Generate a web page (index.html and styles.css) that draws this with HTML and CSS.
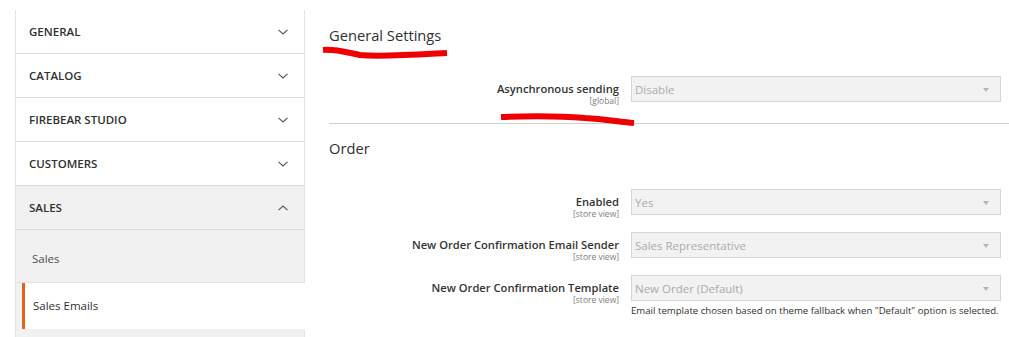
FILE: index.html
```html
<!DOCTYPE html>
<html>
<head>
<meta charset="utf-8">
<link rel="stylesheet" href="styles.css">
</head>
<body>
<div class="page">
  <aside class="sidebar">
    <div class="tab"><span>GENERAL</span><svg class="chev" viewBox="0 0 10 6"><path d="M0.5 0.8 L5 5 L9.5 0.8" /></svg></div>
    <div class="tab"><span>CATALOG</span><svg class="chev" viewBox="0 0 10 6"><path d="M0.5 0.8 L5 5 L9.5 0.8" /></svg></div>
    <div class="tab"><span>FIREBEAR STUDIO</span><svg class="chev" viewBox="0 0 10 6"><path d="M0.5 0.8 L5 5 L9.5 0.8" /></svg></div>
    <div class="tab"><span>CUSTOMERS</span><svg class="chev" viewBox="0 0 10 6"><path d="M0.5 0.8 L5 5 L9.5 0.8" /></svg></div>
    <div class="tab open"><span>SALES</span><svg class="chev" viewBox="0 0 10 6"><path d="M0.5 5.2 L5 1 L9.5 5.2" /></svg></div>
    <div class="sub">
      <div class="sub-item first">Sales</div>
      <div class="sub-item active">Sales Emails</div>
      <div class="sub-item rest"></div>
    </div>
  </aside>
  <main class="main">
    <h2 class="title">General Settings</h2>
    <div class="row async">
      <div class="label"><span class="name">Asynchronous sending</span><span class="scope">[global]</span></div>
      <div class="field"><div class="select">Disable<span class="arrow"></span></div></div>
    </div>
    <div class="sep"></div>
    <h2 class="title order">Order</h2>
    <div class="row first-order">
      <div class="label"><span class="name">Enabled</span><span class="scope">[store view]</span></div>
      <div class="field"><div class="select">Yes<span class="arrow"></span></div></div>
    </div>
    <div class="row">
      <div class="label"><span class="name">New Order Confirmation Email Sender</span><span class="scope">[store view]</span></div>
      <div class="field"><div class="select">Sales Representative<span class="arrow"></span></div></div>
    </div>
    <div class="row">
      <div class="label"><span class="name">New Order Confirmation Template</span><span class="scope">[store view]</span></div>
      <div class="field"><div class="select">New Order (Default)<span class="arrow"></span></div><div class="note">Email template chosen based on theme fallback when "Default" option is selected.</div></div>
    </div>
  </main>
</div>
<svg class="marks" width="1009" height="337" viewBox="0 0 1009 337">
  <path d="M323 50 C335 49 345 52 360 55 C380 57 410 55 447 53" />
  <path d="M501 117 C530 116 560 116 585 118 C605 119 620 122 634 123" />
</svg>
</body>
</html>
```
FILE: styles.css
```css
* { box-sizing: border-box; }
html, body { margin: 0; padding: 0; background: #fff; }
body {
  font-family: "Open Sans", "Liberation Sans", sans-serif;
  color: #303030;
  width: 1009px;
  height: 337px;
  overflow: hidden;
  position: relative;
}
.page {
  display: flex;
  align-items: flex-start;
  padding-left: 15px;
  padding-top: 10px;
}
.sidebar {
  width: 290px;
  flex: none;
  border-left: 1px solid #e3e3e3;
  border-right: 1px solid #e3e3e3;
}
.tab {
  height: 44px;
  border-bottom: 1px solid #dcdcdc;
  display: flex;
  align-items: center;
  justify-content: space-between;
  padding: 0 16px 0 13px;
  font-size: 11.5px;
  font-weight: 600;
  color: #303030;
  background: #fff;
}
.tab.open { background: #f1f1f1; }
.chev {
  width: 10px;
  height: 6px;
  fill: none;
  stroke: #555;
  stroke-width: 1.1;
}
.sub { background: #f1f1f1; }
.sub-item {
  font-size: 11.5px;
  color: #303030;
  display: flex;
  align-items: center;
}
.sub-item.first {
  height: 53px;
  padding: 4px 0 0 16px;
  color: #505050;
  border-bottom: 1px solid #e3e3e3;
}
.sub-item.active {
  height: 46px;
  margin-left: 6px;
  padding-left: 8px;
  padding-bottom: 2px;
  background: #fff;
  border-left: 3px solid #e3621f;
  margin-right: -1px;
}
.sub-item.rest { height: 12px; }
.main {
  flex: 1;
  margin-left: 24px;
  display: flex;
  flex-direction: column;
}
.title {
  margin: 14px 0 0 0;
  font-size: 14.7px;
  font-weight: 400;
  line-height: 22px;
  color: #303030;
  height: 22px;
}
.title.order { margin-top: 13px; }
.row {
  display: flex;
  align-items: flex-start;
  margin-top: 17px;
  gap: 12px;
}
.row.async { margin-top: 30px; }
.row.first-order { margin-top: 30px; }
.label {
  width: 290px;
  height: 26px;
  flex: none;
  display: flex;
  flex-direction: column;
  align-items: flex-end;
  padding-top: 6px;
}
.name {
  font-size: 11.2px;
  font-weight: 600;
  line-height: 14px;
  color: #333;
  white-space: nowrap;
}
.scope {
  font-size: 8.5px;
  line-height: 9px;
  color: #808080;
  white-space: nowrap;
}
.field {
  width: 370px;
  flex: none;
}
.select {
  height: 26px;
  border: 1px solid #d6d6d6;
  background: #f2f2f2;
  color: #ababab;
  font-size: 11.5px;
  display: flex;
  align-items: center;
  padding-left: 3px;
  position: relative;
}
.arrow {
  position: absolute;
  right: 11px;
  top: 11px;
  width: 0;
  height: 0;
  border-left: 3px solid transparent;
  border-right: 3px solid transparent;
  border-top: 4px solid #b5b5b5;
}
.note {
  font-size: 9.65px;
  line-height: 14px;
  color: #303030;
  margin-top: 3px;
  white-space: nowrap;
}
.sep {
  height: 1px;
  background: #cfcfcf;
  margin-top: 21px;
}
.marks {
  position: absolute;
  left: 0;
  top: 0;
  pointer-events: none;
}
.marks path {
  fill: none;
  stroke: #ee0000;
  stroke-width: 6;
  stroke-linecap: butt;
}
```
